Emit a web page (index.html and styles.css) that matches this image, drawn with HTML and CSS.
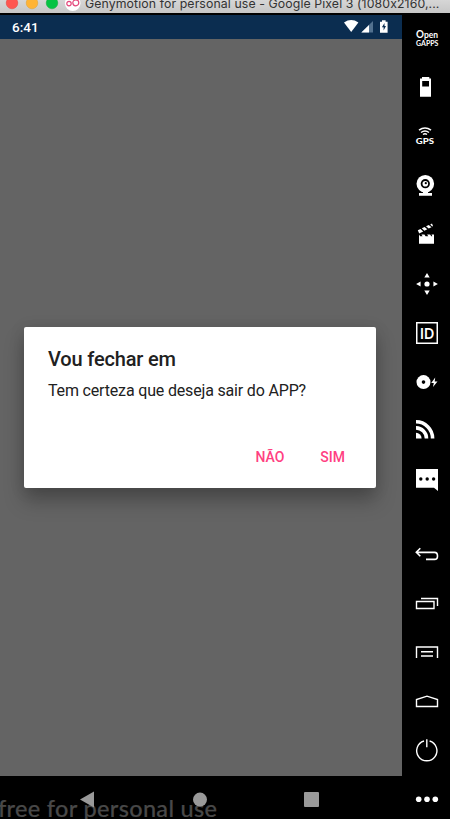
FILE: index.html
```html
<!DOCTYPE html>
<html lang="pt">
<head>
<meta charset="utf-8">
<title>Genymotion for personal use</title>
<link rel="stylesheet" href="styles.css">
</head>
<body>
<div class="window">
  <header class="titlebar">
    <svg class="lights" width="85" height="13" viewBox="0 0 85 13">
      <circle cx="12" cy="3" r="5.8" fill="#ff5650" stroke="#e0443e" stroke-width=".5"/>
      <circle cx="32" cy="3" r="5.8" fill="#ffb436" stroke="#dea033" stroke-width=".5"/>
      <circle cx="52" cy="3" r="5.8" fill="#05c344" stroke="#1aab40" stroke-width=".5"/>
      <circle cx="72.7" cy="3.3" r="7.8" fill="#fff"/>
      <g fill="none" stroke="#e3477b" stroke-width="1.2"><circle cx="69" cy="3.6" r="2.2"/><circle cx="75.8" cy="2.8" r="3"/></g>
    </svg>
    <span class="window-title">Genymotion for personal use - Google Pixel 3 (1080x2160,...</span>
  </header>
  <div class="workspace">
    <main class="phone">
      <div class="statusbar">
        <span class="clock">6:41</span>
        <svg width="48" height="23" viewBox="0 0 48 23">
          <path d="M0 6.4Q7.2 1.7 14.4 6.4L7.2 16Z" fill="#fff"/>
          <path d="M29 5v11.5H17.3Z" fill="#52718f"/>
          <path d="M25 9v7.5h-7.7Z" fill="#fff"/>
          <path d="M36 5.7h2V4.3h3.6v1.4h2v11.1H36Z" fill="#fff"/>
          <path d="M40.5 7l-2.6 4.3h1.7v3.2l2.4-4.4h-1.5Z" fill="#0b2d50"/>
        </svg>
      </div>
      <div class="screen">
        <section class="dialog">
          <h1>Vou fechar em</h1>
          <p>Tem certeza que deseja sair do APP?</p>
          <div class="actions"><button class="no">NÃO</button><button class="yes">SIM</button></div>
        </section>
      </div>
      <div class="navbar">
        <span class="watermark">free for personal use</span>
        <svg width="402" height="43" viewBox="0 0 402 43" fill="#999">
          <path d="M94 15.5v16L80 23.5Z"/><circle cx="200" cy="23.6" r="7"/><rect x="304" y="16" width="15" height="15" rx="1"/>
        </svg>
      </div>
    </main>
    <aside class="toolbar">
      <div class="tools">
        <svg viewBox="0 0 48 49"><text x="14" y="24.4" class="open" textLength="22" lengthAdjust="spacingAndGlyphs"><tspan class="big-o">O</tspan>pen</text><text x="14" y="31.8" class="gapps" textLength="22.4" lengthAdjust="spacingAndGlyphs">GAPPS</text></svg>
        <svg viewBox="0 0 48 49"><path fill-rule="evenodd" d="M18 15.5h2V14h7.3v1.5H29v18.2H18ZM20.2 18v5.5h6.8V18Z"/></svg>
        <svg viewBox="0 0 48 49"><g class="line" stroke-width="1.5"><path d="M17 18.2q6-4.6 12 0M19 20.5q4-3 8 0M21 22.5q2-1.5 4 0"/></g><text x="13.8" y="31.5" class="gps" textLength="18.2" lengthAdjust="spacingAndGlyphs">GPS</text></svg>
        <svg viewBox="0 0 48 49"><circle cx="23.3" cy="22.7" r="8.8"/><circle cx="23.3" cy="22.7" r="4.6" fill="#000"/><circle cx="23.3" cy="22.7" r="2.8"/><circle cx="23.8" cy="22.2" r="1.1" fill="#000"/><path d="M21 30h5v2h4v2.8H17V32h4Z"/></svg>
        <svg viewBox="0 0 48 49"><path d="M17 24.5l1.2 1.8h2.4l-1.2-1.8h3l1.2 1.8h2.7l-1.2-1.8h3l1.2 1.8h1l-.8-1.8H32v9.3H17Z"/><path d="M15.8 20.3l2.7-1.3 2.7 2.4-4 2ZM19.8 18.3l2.8-1.4 2.7 2.4-2.9 1.4ZM24 16.3l2.8-1.4 2.7 2.4-2.8 1.3ZM28.2 14.4l1.8-.8 1 2.4-.8.4Z"/></svg>
        <svg viewBox="0 0 48 49"><circle cx="25" cy="25" r="2.6"/><path d="M25 14.1l2.7 4.4h-5.4ZM25 35.9l2.7-4.4h-5.4ZM14.1 25l4.5-2.6v5.2ZM35.9 25l-4.5-2.6v5.2Z"/></svg>
        <svg viewBox="0 0 48 49"><rect class="line" x="14.75" y="14.75" width="20.5" height="20.5" stroke-width="1.5"/><text x="18" y="30.5" class="id" textLength="14" lengthAdjust="spacingAndGlyphs">ID</text></svg>
        <svg viewBox="0 0 48 49"><circle cx="21.5" cy="25.1" r="7"/><circle cx="21.5" cy="25.1" r="1.8" fill="#000"/><path d="M33.2 20.5l-4 5.5h2.6l-.8 4 4.5-5.6h-2.8Z"/></svg>
        <svg viewBox="0 0 48 49"><g class="line" stroke-width="3.6"><path d="M14 15.8a16.6 16.6 0 0 1 16.6 16.6M14 21.9a10.5 10.5 0 0 1 10.5 10.5"/></g><path d="M14 26.8a5.6 5.6 0 0 1 5.6 5.6H14Z"/></svg>
        <svg viewBox="0 0 48 49"><path d="M14 14h22v22l-4-3.2H14Z"/><g fill="#000"><circle cx="18.8" cy="24" r="1.7"/><circle cx="25.2" cy="24" r="1.7"/><circle cx="31.6" cy="24" r="1.7"/></g></svg>
      </div>
      <div class="controls">
        <svg viewBox="0 0 48 49"><path class="line" d="M18.3 18.3l-4 4 4 4M14.5 22.4H32.5q3 0 3 3.5t-3 3.5H24" stroke-width="1.6"/></svg>
        <svg viewBox="0 0 48 49"><path class="line" d="M14.5 22.5h17.5v7H14.5ZM19 19.5h16.5V27" stroke-width="1.4"/></svg>
        <svg viewBox="0 0 48 49"><path class="line" d="M14.5 30V19h21v11M19 23.7h12M19 28h12" stroke-width="1.4"/></svg>
        <svg viewBox="0 0 48 49"><path class="line" d="M14.5 29.5v-7L25 19.2l10.5 3.3v7Z" stroke-width="1.4"/></svg>
        <svg viewBox="0 0 48 49"><path class="line" d="M22 15a10.1 10.1 0 1 0 5.6 0M24.8 13.3v8" stroke-width="1.4"/></svg>
        <svg viewBox="0 0 48 49"><circle cx="16.7" cy="24.2" r="2.8"/><circle cx="25" cy="24.2" r="2.8"/><circle cx="33.3" cy="24.2" r="2.8"/></svg>
      </div>
    </aside>
  </div>
</div>
</body>
</html>
```
FILE: styles.css
```css
* { box-sizing: border-box; }
body { margin: 0; background: #000; font-family: Roboto, sans-serif; }
.window { width: 450px; height: 819px; overflow: hidden; display: flex; flex-direction: column; }
.titlebar { height: 14px; flex: none; display: flex; overflow: hidden; background: linear-gradient(#d6d6d6, #c6c6c6); border-bottom: 1px solid #000; }
.lights { flex: none; }
.window-title { font: 400 12.3px/14px Inter, sans-serif; font-feature-settings: "calt" 0; letter-spacing: .1px; color: #333; margin-top: -3px; white-space: nowrap; }
.workspace { display: flex; height: 805px; }
.phone { width: 402px; display: flex; flex-direction: column; }
.statusbar { height: 25px; padding: 0 14px 0 12px; display: flex; justify-content: space-between; background: #0b2d50; border-top: 1px solid #000; }
.statusbar svg { margin: 1px -4px 0 0; }
.clock { color: #fff; font-size: 13.5px; font-weight: 500; line-height: 24px; }
.screen { height: 737px; padding: 288px 26px 0 24px; background: #646464; overflow: hidden; }
.dialog { height: 161px; padding: 20px 20px 0 24px; background: #fff; border-radius: 2px; box-shadow: 0 13px 20px rgba(0,0,0,.25), 0 2px 16px rgba(0,0,0,.12); color: #212121; }
h1 { margin: 0; font-size: 20px; font-weight: 500; line-height: 24px; letter-spacing: -.17px; }
p { margin: 9px 0 0; font-size: 16px; line-height: 22px; letter-spacing: -.17px; }
.actions { display: flex; justify-content: flex-end; margin-top: 45px; }
button { border: 0; padding: 0; background: none; color: #ff4081; font: 500 14px/20px Roboto, sans-serif; }
.yes { margin: 0 11px 0 36px; }
.navbar { height: 43px; position: relative; overflow: hidden; }
.navbar svg { position: relative; display: block; }
.watermark { position: absolute; left: -2px; top: 18px; font: 500 23.5px/28px Lato, sans-serif; letter-spacing: .32px; color: #484848; -webkit-text-stroke: .2px #484848; white-space: nowrap; }
.toolbar { width: 48px; display: flex; flex-direction: column; justify-content: space-between; gap: 26px; }
.toolbar svg { display: block; width: 48px; height: 49px; fill: #fff; }
.tools { flex: none; }
.toolbar .line { fill: none; stroke: #fff; }
.open { font: 700 9.5px Lato, sans-serif; }
.big-o { font-size: 11px; font-weight: 700; }
.gapps { font: 700 7.4px Lato, sans-serif; }
.gps { font: 900 8.2px Lato, sans-serif; }
.id { font: 700 15px Lato, sans-serif; }
.controls { flex: none; height: 289px; overflow: hidden; }
```
